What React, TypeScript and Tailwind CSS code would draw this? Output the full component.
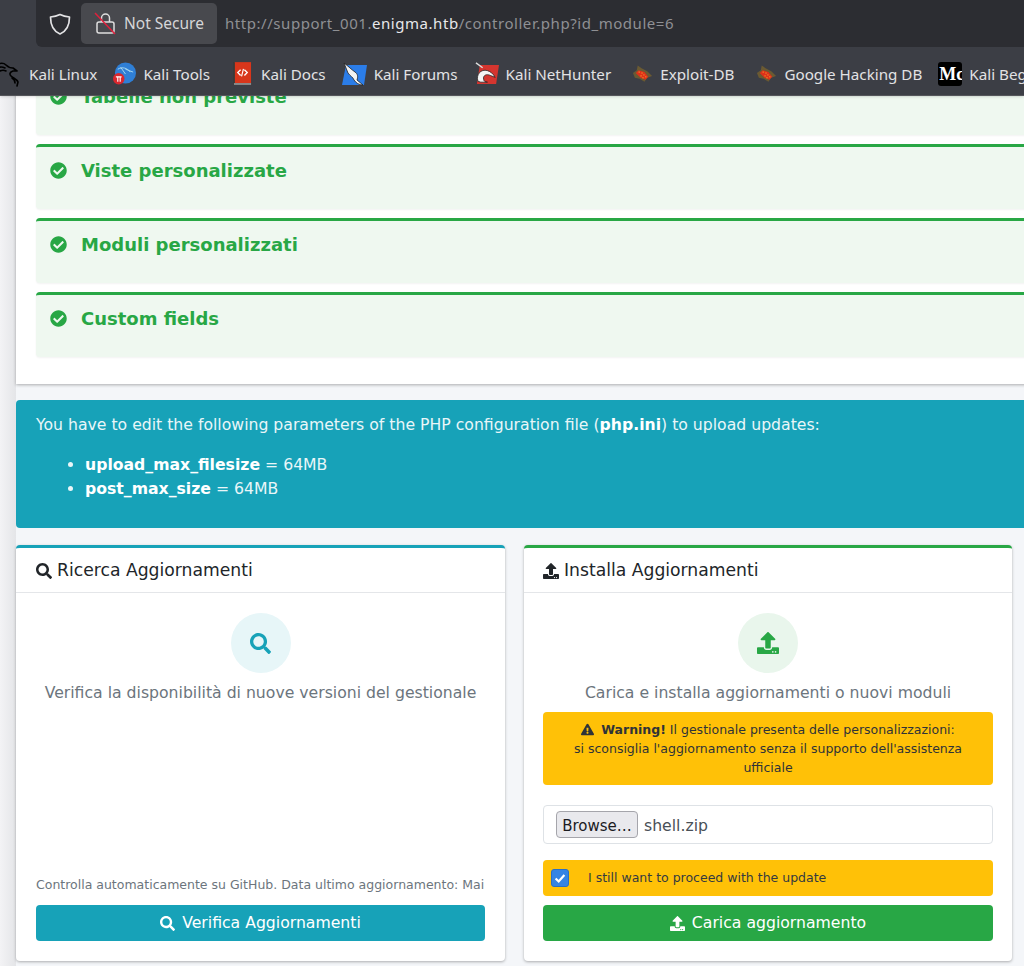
import { FaCheckCircle, FaExclamationTriangle, FaSearch, FaUpload } from "react-icons/fa";

const checks = ["Tabelle non previste", "Viste personalizzate", "Moduli personalizzati", "Custom fields"];

function Dragon() {
  return (
    <svg viewBox="0 0 24 26" className="w-[24px] h-[26px] shrink-0 -ml-[2px]" fill="none" stroke="#000" strokeWidth="1.600" strokeLinecap="round" strokeLinejoin="round">
      <path d="M0 3c3-1 6-1 8 1 2 2 4 3 7 3l4 3-4 0c-3 1-4 3-2 5 2 2 6 3 7 6l-1 4" />
      <path d="M0 7c3-2 5-1 7 0M2 10c2-1 4-1 6 0M14 17c2 1 3 2 3 5" />
    </svg>
  );
}

function Favicon({ name }: { name: string }) {
  if (name === "tools") {
    return (
      <svg viewBox="0 0 24 24" className="w-[23px] h-[24px] shrink-0">
        <circle cx="13" cy="11" r="11" fill="#2f7fd6" />
        <path d="M5 7c5-3 10-1 13 3M8 5l5 7M13 7l8 3" stroke="#a8d8ee" strokeWidth="1" fill="none" />
        <circle cx="6" cy="17" r="6" fill="#d9272e" />
        <path d="M3 15h6M5 15v5M7.500 15v5" stroke="#fff" strokeWidth="1.200" />
      </svg>
    );
  }
  if (name === "docs") {
    return (
      <svg viewBox="0 0 20 25" className="w-[19px] h-[24px] mr-[2px] shrink-0">
        <rect x="1" y="0" width="18" height="22" fill="#d8361b" />
        <rect x="0" y="0" width="2" height="24" fill="#3a3a3a" />
        <rect x="1" y="22" width="18" height="2" fill="#8b8b8b" />
        <path d="M8 8l-3 3 3 3M12 8l3 3-3 3" stroke="#fff" strokeWidth="1.400" fill="none" />
        <path d="M11 7l-2 8" stroke="#fff" strokeWidth="1.200" />
      </svg>
    );
  }
  if (name === "forums") {
    return (
      <svg viewBox="0 0 25 25" className="w-[25px] h-[25px] shrink-0">
        <path d="M4 3h21l-3 20H0z" fill="#2b7de9" />
        <path d="M2 1c4 3 8 7 11 9 3 2 3 5 2 8l6 5c-4 0-7-2-9-5-1-3-4-4-6-7z" fill="#f2f2f2" stroke="#222" strokeWidth="0.800" />
      </svg>
    );
  }
  if (name === "hunter") {
    return (
      <svg viewBox="0 0 25 25" className="w-[24px] h-[24px] shrink-0">
        <path d="M5 3h20l-3 20H2z" fill="#d5352f" />
        <path d="M3 20c-2-7 3-13 10-11 3 1 6 3 8 7l-5-2c-4-2-8 0-7 4 0 2 2 3 4 3H6z" fill="#f4f4f4" stroke="#222" strokeWidth="0.800" />
        <path d="M1 1l7 5" stroke="#ddd" strokeWidth="1.500" />
      </svg>
    );
  }
  if (name === "exploit") {
    return (
      <svg viewBox="0 0 22 20" className="w-[21px] h-[20px] shrink-0">
        <path d="M1 9l4-3 1-5 4 3 6 3 5 5-5 2-3 4-5-3-5-1z" fill="#6b5a32" />
        <path d="M4 9l3-3 6 2 4 5-3 3-5-2z" fill="#e0301a" />
        <path d="M7 8h1M10 9h1M12 11h1M9 12h1M11 14h1M14 13h1" stroke="#f5d130" strokeWidth="1" />
      </svg>
    );
  }
  return (
    <div className="w-[24px] h-[24px] shrink-0 bg-black rounded-[3px] overflow-hidden text-white font-bold text-[18px] leading-[24px] pl-[1px] font-['Liberation_Serif',serif]">
      Mc
    </div>
  );
}

function Bookmark({ icon, label, className }: { icon: string; label: string; className: string }) {
  return (
    <div className={`flex items-center shrink-0 gap-[7px] ${className}`}>
      {icon === "kali" ? <Dragon /> : <Favicon name={icon} />}
      <span>{label}</span>
    </div>
  );
}

function TopBar() {
  return (
    <header className="relative z-10 h-[96px] bg-[#3c3e45] border-b border-[#55565b] font-['Noto_Sans',sans-serif] shadow-sm">
      <div className="h-[47px] ml-[36px] bg-[#2c2d32] rounded-bl-[6px] flex items-center">
        <svg viewBox="0 0 24 24" className="w-[24px] h-[26px] ml-[12px] shrink-0" fill="none" stroke="#e3e3e5" strokeWidth="1.700" strokeLinejoin="round">
          <path d="M12 2.500c3 1.500 6 2.200 9.500 2.500 0 8-2.500 14-9.500 17-7-3-9.500-9-9.500-17 3.500-.300 6.500-1 9.500-2.500z" />
        </svg>
        <div className="ml-[9px] mb-[1px] h-[41px] w-[136px] rounded-[5px] bg-[#48494e] flex items-center shrink-0">
          <svg viewBox="0 0 24 24" className="w-[24px] h-[24px] ml-[13px] shrink-0" fill="none" strokeWidth="1.500">
            <rect x="3" y="11" width="17" height="11" rx="2" stroke="#dedede" />
            <path d="M7.500 11V7a4 4 0 0 1 8 0v4" stroke="#dedede" />
            <path d="M1 2l20 21" stroke="#e0203c" />
          </svg>
          <span className="ml-[6px] pt-[1px] text-[15.500px] text-[#d6d6d8]">Not Secure</span>
        </div>
        <div className="ml-[8px] text-[15px] text-[#8f9094] whitespace-nowrap tracking-[0.55px]">
          http://support_001.<span className="text-[#e8e8ea]">enigma.htb</span>/controller.php?id_module=6
        </div>
      </div>
      <div className="h-[48px] pt-[6px] flex items-center text-[15.200px] text-[#e2e2e4] whitespace-nowrap overflow-hidden">
        <Bookmark icon="kali" label="Kali Linux" className="ml-0" />
        <Bookmark icon="tools" label="Kali Tools" className="ml-[16px]" />
        <Bookmark icon="docs" label="Kali Docs" className="ml-[23px]" />
        <Bookmark icon="forums" label="Kali Forums" className="ml-[16px]" />
        <Bookmark icon="hunter" label="Kali NetHunter" className="ml-[17px]" />
        <Bookmark icon="exploit" label="Exploit-DB" className="ml-[21px]" />
        <Bookmark icon="exploit" label="Google Hacking DB" className="ml-[22px]" />
        <Bookmark icon="mc" label="Kali Beg" className="ml-[16px]" />
      </div>
    </header>
  );
}

export default function App() {
  return (
    <div className="w-[1024px] h-[966px] overflow-hidden bg-[#f4f6f9] font-['DejaVu_Sans',sans-serif] text-[15.680px] text-[#212529]">
      <TopBar />
      <div className="flex -mt-[96px]">
        <aside className="w-[16px] h-[966px] shrink-0 bg-gradient-to-r from-[#f3f3f5] to-[#e4e5e8]" />
        <main className="w-[1100px] shrink-0 pt-[70px]">
          <section className="bg-white px-[20px] h-[314px] shadow-[0_1px_3px_rgba(0,0,0,0.3)]">
            {checks.map((name) => (
              <div key={name} className="h-[65px] mb-[9px] bg-[#eff8f0] border-t-[3px] border-[#28a745] rounded-[4px] px-[14px] pt-[10px] flex items-start gap-[14px] text-[#28a745] font-bold text-[18px] last:mb-0 shadow-[0_1px_2px_rgba(0,0,0,0.05)]">
                <FaCheckCircle className="w-[17px] h-[17px] mt-[5px] shrink-0" />
                <span>{name}</span>
              </div>
            ))}
          </section>

          <section className="mt-[16px] h-[128px] bg-[#17a2b8] rounded-[4px] text-[#e9f6f8] px-[20px] pt-[13px]">
            <p>
              You have to edit the following parameters of the PHP configuration file (<b className="text-white">php.ini</b>) to upload updates:
            </p>
            <ul className="list-disc pl-[49px] mt-[16px] leading-[24px]">
              <li><b className="text-white">upload_max_filesize</b> = 64MB</li>
              <li><b className="text-white">post_max_size</b> = 64MB</li>
            </ul>
          </section>

          <div className="mt-[17px] w-[996px] h-[416px] grid grid-cols-[489px_488px] gap-[19px]">
            <section className="bg-white rounded-[4px] border-t-[3px] border-[#17a2b8] shadow-[0_1px_3px_rgba(0,0,0,0.3)] flex flex-col">
              <h3 className="h-[45px] pt-[1px] border-b border-[#e4e6e9] pl-[20px] flex items-center gap-[5px] text-[17.200px]">
                <FaSearch className="w-[16px] h-[16px] text-[#212529]" />
                Ricerca Aggiornamenti
              </h3>
              <div className="flex-1 px-[20px] pt-[20px] pb-[20px] flex flex-col items-center">
                <div className="w-[60px] h-[60px] rounded-full bg-[#e7f6f8] flex items-center justify-center">
                  <FaSearch className="w-[21px] h-[21px] text-[#17a2b8]" />
                </div>
                <p className="mt-[8px] leading-[24px] text-[#6c757d] text-center whitespace-nowrap">Verifica la disponibilità di nuove versioni del gestionale</p>
                <p className="mt-auto w-full text-[12.500px] text-[#6c757d] whitespace-nowrap">Controlla automaticamente su GitHub. Data ultimo aggiornamento: Mai</p>
                <button className="mt-[10px] w-full h-[36px] bg-[#17a2b8] rounded-[4px] text-white flex items-center justify-center gap-[7px]">
                  <FaSearch className="w-[15px] h-[15px]" />
                  Verifica Aggiornamenti
                </button>
              </div>
            </section>

            <section className="bg-white rounded-[4px] border-t-[3px] border-[#28a745] shadow-[0_1px_3px_rgba(0,0,0,0.3)] flex flex-col">
              <h3 className="h-[45px] pt-[1px] border-b border-[#e4e6e9] pl-[19px] flex items-center gap-[5px] text-[17.200px]">
                <FaUpload className="w-[16px] h-[16px] text-[#212529]" />
                Installa Aggiornamenti
              </h3>
              <div className="flex-1 px-[19px] pt-[20px] pb-[20px] flex flex-col items-center">
                <div className="w-[60px] h-[60px] rounded-full bg-[#e9f6ec] flex items-center justify-center">
                  <FaUpload className="w-[22px] h-[22px] text-[#28a745]" />
                </div>
                <p className="mt-[8px] leading-[24px] text-[#6c757d] text-center whitespace-nowrap">Carica e installa aggiornamenti o nuovi moduli</p>
                <div className="mt-[7px] w-full h-[73px] bg-[#ffc107] rounded-[4px] text-[12.500px] leading-[19px] text-[#2f3338] text-center pt-[8px] px-[20px]">
                  <FaExclamationTriangle className="inline w-[13px] h-[13px] mr-[7px] -mt-[2px]" />
                  <b>Warning!</b> Il gestionale presenta delle personalizzazioni:
                  <br />
                  si sconsiglia l'aggiornamento senza il supporto dell'assistenza ufficiale
                </div>
                <div className="mt-[20px] w-full h-[39px] border border-[#dee2e6] rounded-[4px] flex items-center pl-[12px] text-[#495057]">
                  <span className="h-[27px] w-[82px] pt-[3px] rounded-[4px] bg-[#e9e9ed] border border-[#a5a5ab] text-[15px] text-[#1b1b1f] flex items-center justify-center">Browse…</span>
                  <span className="ml-[6px] pt-[3px]">shell.zip</span>
                </div>
                <label className="mt-[16px] w-full h-[36px] bg-[#ffc107] rounded-[4px] flex items-center pl-[8px] text-[12.500px] text-[#343a40]">
                  <span className="w-[18px] h-[18px] bg-[#3584e4] rounded-[3px] border border-[#2a6fc4] flex items-center justify-center">
                    <svg viewBox="0 0 16 16" className="w-[14px] h-[14px]" fill="none" stroke="#fff" strokeWidth="2.500">
                      <path d="M3 8.500l3.500 3.500L13 4.500" />
                    </svg>
                  </span>
                  <span className="ml-[19px]">I still want to proceed with the update</span>
                </label>
                <button className="mt-[9px] w-full h-[36px] bg-[#28a745] rounded-[4px] text-white flex items-center justify-center gap-[7px]">
                  <FaUpload className="w-[15px] h-[15px]" />
                  Carica aggiornamento
                </button>
              </div>
            </section>
          </div>
        </main>
      </div>
    </div>
  );
}
